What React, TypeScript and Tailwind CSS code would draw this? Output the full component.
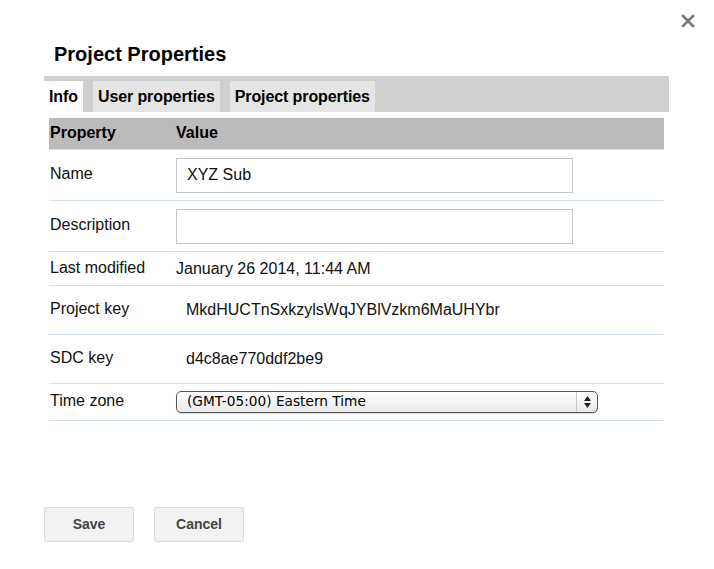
import React from "react";

const rows = [
  { label: "Name", h: "h-[51px]", kind: "input", value: "XYZ Sub" },
  { label: "Description", h: "h-[51px]", kind: "input", value: "" },
  { label: "Last modified", h: "h-[34px]", kind: "text", value: "January 26 2014, 11:44 AM" },
  { label: "Project key", h: "h-[49px]", kind: "key", value: "MkdHUCTnSxkzylsWqJYBlVzkm6MaUHYbr" },
  { label: "SDC key", h: "h-[49px]", kind: "key", value: "d4c8ae770ddf2be9" },
  { label: "Time zone", h: "h-[37px]", kind: "select", value: "(GMT-05:00) Eastern Time" },
];

function CloseIcon() {
  return (
    <svg width="14" height="14" viewBox="0 0 14 14" className="absolute left-[681px] top-[14px]">
      <path d="M2 2 L12 12 M12 2 L2 12" stroke="#777" strokeWidth="2.6" strokeLinecap="square" />
    </svg>
  );
}

function Select({ value }: { value: string }) {
  return (
    <div className="flex h-[22px] w-[422px] items-center rounded-[5px] border border-[#555] bg-gradient-to-b from-white to-[#e9e9e9] shadow-[0_1px_1px_rgba(0,0,0,0.15)]">
      <span className="flex-1 pl-[10px] font-['DejaVu_Sans',sans-serif] text-[13.7px] leading-none text-black">
        {value}
      </span>
      <div className="flex h-full w-[21px] flex-col items-center justify-center gap-[2px] border-l border-[#c8c8c8]">
        <svg width="7" height="5" viewBox="0 0 7 5">
          <path d="M3.5 0 L7 5 L0 5 Z" fill="#222" />
        </svg>
        <svg width="7" height="5" viewBox="0 0 7 5">
          <path d="M0 0 L7 0 L3.5 5 Z" fill="#222" />
        </svg>
      </div>
    </div>
  );
}

export default function App() {
  return (
    <div className="relative h-[569px] w-[714px] bg-white font-['Liberation_Sans',Arial,sans-serif] text-[#111]">
      <CloseIcon />
      <div className="pl-[44px] pr-[45px] pt-[42px]">
        <h1 className="pl-[10px] text-[20px] font-bold leading-6 text-black">Project Properties</h1>

        <div className="mt-[10px] flex h-[36px] gap-[10px] bg-[#cfcfcf] pt-[5px]">
          <div className="h-[31px] bg-white px-[5px] text-[16px] font-bold leading-[31px] tracking-[-0.1px] text-black">
            Info
          </div>
          <div className="h-[31px] bg-[#e5e5e5] px-[5px] text-[16px] font-bold leading-[31px] tracking-[-0.1px] text-black">
            User properties
          </div>
          <div className="h-[31px] bg-[#e5e5e5] px-[5px] text-[16px] font-bold leading-[31px] tracking-[-0.1px] text-black">
            Project properties
          </div>
        </div>

        <div className="mt-[6px] px-[5px]">
          <div className="flex h-[32px] items-center border-b border-[#d3e2f3] bg-[#bbbbbb] text-[16px] font-bold text-black">
            <div className="w-[127px] pl-[1px] pb-[1px]">Property</div>
            <div className="pb-[1px]">Value</div>
          </div>

          {rows.map((r) => (
            <div key={r.label} className={`flex items-center border-b border-[#d3e2f3] text-[16px] ${r.h}`}>
              <div className="w-[127px] shrink-0 pb-[2px] pl-[1px]">{r.label}</div>
              {r.kind === "input" && (
                <div className="flex h-[35px] w-[397px] items-center border border-[#c6c6c6] pl-[10px]">{r.value}</div>
              )}
              {r.kind === "text" && <div>{r.value}</div>}
              {r.kind === "key" && <div className="pl-[10px]">{r.value}</div>}
              {r.kind === "select" && <Select value={r.value} />}
            </div>
          ))}
        </div>

        <div className="mt-[86px] flex gap-[20px]">
          <button className="h-[35px] w-[90px] rounded-[2px] border border-[#dcdcdc] bg-[#f2f2f2] text-[14px] font-bold text-[#444]">
            Save
          </button>
          <button className="h-[35px] w-[90px] rounded-[2px] border border-[#dcdcdc] bg-[#f2f2f2] text-[14px] font-bold text-[#444]">
            Cancel
          </button>
        </div>
      </div>
    </div>
  );
}
